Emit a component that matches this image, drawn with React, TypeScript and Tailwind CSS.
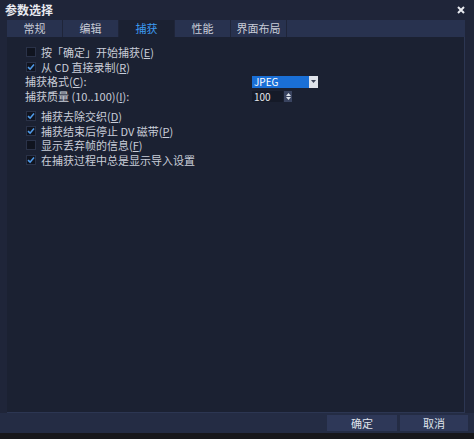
import React from "react";

const font = { fontFamily: '"Noto Sans CJK SC", "Noto Sans", sans-serif' };

function Key({ k }: { k: string }) {
  return (
    <span>
      (<span className="underline">{k}</span>)
    </span>
  );
}

function Check({ checked, children }: { checked?: boolean; children: React.ReactNode }) {
  return (
    <div className="flex h-[14.5px] items-center gap-[5px] pl-[19px]">
      <span className="flex h-[10px] w-[10px] items-center justify-center border border-[#2a3248] bg-[#10141f]">
        {checked && (
          <svg width="8" height="8" viewBox="0 0 8 8">
            <path d="M1 4.2 L3.1 6.2 L7 1.6" stroke="#4f9ae8" strokeWidth="1.6" fill="none" />
          </svg>
        )}
      </span>
      <span>{children}</span>
    </div>
  );
}

export default function App() {
  const tabs = ["常规", "编辑", "捕获", "性能", "界面布局"];
  return (
    <div style={font} className="flex h-[439px] w-[474px] flex-col bg-[#1f2539] text-[11px] text-[#c9cdd8]">
      {/* title bar */}
      <div className="flex h-[20px] items-center justify-between pl-[5px] pr-[9px]">
        <span className="text-[12px] font-bold text-[#e8eaf0]">参数选择</span>
        <svg width="8" height="8" viewBox="0 0 8 8">
          <path d="M1 1 L7 7 M7 1 L1 7" stroke="#e8eaf0" strokeWidth="2" />
        </svg>
      </div>

      <div className="flex flex-1 flex-col pl-[7px] pr-[9px]">
        {/* tabs */}
        <div className="flex h-[17px] bg-[#28324f]">
          {tabs.map((t, i) => (
            <div
              key={t}
              className={
                "flex w-[56px] items-center justify-center border-r border-[#1f2539] " +
                (i === 2 ? "bg-[#1b2132] text-[#3d9bf0]" : "text-[#c9cdd8]")
              }
            >
              {t}
            </div>
          ))}
        </div>

        {/* panel */}
        <div className="flex h-[376px] flex-col border-r border-b border-[#2c3652] bg-[#1b2132] pt-[8px]">
          <Check>
            按「确定」开始捕获<Key k="E" />
          </Check>
          <Check checked>
            从 CD 直接录制<Key k="R" />
          </Check>
          <div className="flex h-[15px] items-center pl-[18px]">
            <span className="w-[227px]">
              捕获格式<Key k="C" />:
            </span>
            <div className="flex h-[12px] w-[66px] bg-[#1a6fd6]">
              <span className="flex-1 pl-[2px] text-[10px] leading-[12px] text-white">JPEG</span>
              <span className="flex w-[9px] items-center justify-center bg-[#dfe3ea]">
                <svg width="5" height="3" viewBox="0 0 5 3">
                  <path d="M0 0 L5 0 L2.5 3 Z" fill="#3a4256" />
                </svg>
              </span>
            </div>
          </div>
          <div className="flex h-[15px] items-center pl-[18px]">
            <span className="w-[227px]">
              捕获质量 (10..100)<Key k="I" />:
            </span>
            <div className="flex h-[11px] items-center">
              <span className="w-[31px] bg-[#151a28] pl-[2px] text-[10px] leading-[11px] text-[#e3e6ec]">100</span>
              <span className="ml-[1px] flex h-[11px] w-[8px] flex-col items-center justify-center gap-[1px] bg-[#3a4460]">
                <svg width="5" height="3" viewBox="0 0 5 3">
                  <path d="M0 3 L5 3 L2.5 0 Z" fill="#dfe3ea" />
                </svg>
                <svg width="5" height="3" viewBox="0 0 5 3">
                  <path d="M0 0 L5 0 L2.5 3 Z" fill="#dfe3ea" />
                </svg>
              </span>
            </div>
          </div>
          <div className="h-[5px]" />
          <Check checked>
            捕获去除交织<Key k="D" />
          </Check>
          <Check checked>
            捕获结束后停止 DV 磁带<Key k="P" />
          </Check>
          <Check>
            显示丢弃帧的信息<Key k="F" />
          </Check>
          <Check checked>在捕获过程中总是显示导入设置</Check>
        </div>
      </div>

      {/* bottom bar */}
      <div className="flex h-[20px] items-center justify-end gap-[3px] bg-[#242c44] pr-[6px]">
        <div className="flex h-[16px] w-[70px] items-center justify-center bg-[#2e3858] text-[#dfe2ea]">确定</div>
        <div className="flex h-[16px] w-[68px] items-center justify-center bg-[#2e3858] text-[#dfe2ea]">取消</div>
      </div>
      <div className="h-[6px] bg-[#17171b]" />
    </div>
  );
}
